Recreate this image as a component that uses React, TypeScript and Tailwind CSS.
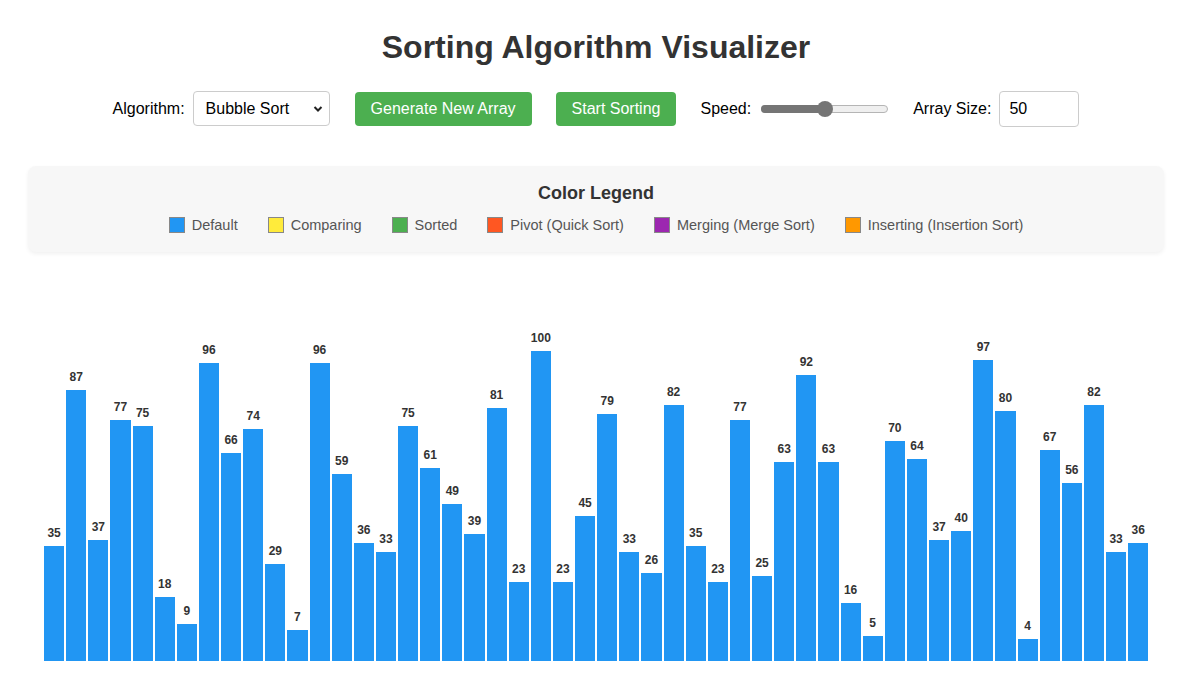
import React from "react";

const values = [
  35, 87, 37, 77, 75, 18, 9, 96, 66, 74, 29, 7, 96, 59, 36, 33, 75, 61, 49, 39,
  81, 23, 100, 23, 45, 79, 33, 26, 82, 35, 23, 77, 25, 63, 92, 63, 16, 5, 70, 64,
  37, 40, 97, 80, 4, 67, 56, 82, 33, 36,
];

const legend = [
  { label: "Default", color: "bg-[#2196F3]" },
  { label: "Comparing", color: "bg-[#FFEB3B]" },
  { label: "Sorted", color: "bg-[#4CAF50]" },
  { label: "Pivot (Quick Sort)", color: "bg-[#FF5722]" },
  { label: "Merging (Merge Sort)", color: "bg-[#9C27B0]" },
  { label: "Inserting (Insertion Sort)", color: "bg-[#FF9800]" },
];

export default function App() {
  return (
    <div
      className="w-full h-[697px] overflow-hidden bg-white text-[#333]"
      style={{ fontFamily: '"Liberation Sans", Arial, sans-serif' }}
    >
      <h1 className="pt-[29px] text-[32px] leading-[37px] font-bold text-center text-[#333]">
        Sorting Algorithm Visualizer
      </h1>

      <div className="mt-[25px] flex justify-center items-center h-[35px] text-[16px] text-black">
        <div className="flex items-center gap-2">
          <span>Algorithm:</span>
          <div className="relative w-[137px] h-[35px] border border-[#ccc] rounded-[4px] bg-white flex items-center pl-[12px]">
            <span>Bubble Sort</span>
            <svg
              className="absolute right-[6px] top-[13px]"
              width="10"
              height="8"
              viewBox="0 0 10 8"
            >
              <path d="M1.5 2 L5 5.5 L8.5 2" stroke="#222" strokeWidth="2" fill="none" />
            </svg>
          </div>
        </div>
        <button className="ml-[25px] h-[34px] px-[16px] rounded-[4px] bg-[#4CAF50] text-white text-[16px]">
          Generate New Array
        </button>
        <button className="ml-[24px] h-[34px] px-[16px] rounded-[4px] bg-[#4CAF50] text-white text-[16px]">
          Start Sorting
        </button>
        <div className="ml-[24px] flex items-center">
          <span>Speed:</span>
          <div className="relative ml-[10px] w-[127px] h-[8px] rounded-full bg-[#efefef] border border-[#b5b5b5]">
            <div className="absolute left-[-1px] top-[-1px] h-[8px] w-[64px] rounded-full bg-[#757575]" />
            <div className="absolute left-[55px] top-[-5px] w-[16px] h-[16px] rounded-full bg-[#757575]" />
          </div>
        </div>
        <div className="ml-[25px] flex items-center gap-2">
          <span>Array Size:</span>
          <div className="w-[80px] h-[36px] border border-[#ccc] rounded-[4px] bg-white flex items-center pl-[9px]">
            50
          </div>
        </div>
      </div>

      <div className="mx-[28px]">
        <div className="mt-[40px] h-[86px] rounded-[8px] bg-[#f7f7f7] shadow-[0_2px_4px_rgba(0,0,0,0.06)] pt-[17px]">
          <h3 className="text-[18px] leading-[21px] font-bold text-center text-[#333]">
            Color Legend
          </h3>
          <div className="mt-[12px] flex justify-center items-center">
            {legend.map((l) => (
              <div key={l.label} className="flex items-center mx-[15px]">
                <span
                  className={`inline-block w-[16px] h-[16px] border border-[#888] ${l.color}`}
                />
                <span className="ml-[7px] text-[14.5px] leading-[18px] text-[#555]">
                  {l.label}
                </span>
              </div>
            ))}
          </div>
        </div>

        <div className="mt-[9px] h-[400px] px-[16px] flex items-end gap-[2px]">
          {values.map((v, i) => (
            <div
              key={i}
              className="relative flex-1 bg-[#2196F3]"
              style={{ height: `${v * 3 + 10}px` }}
            >
              <span className="absolute left-0 right-0 top-[-20px] text-center text-[12px] leading-[14px] font-bold text-[#333]">
                {v}
              </span>
            </div>
          ))}
        </div>
      </div>
    </div>
  );
}
